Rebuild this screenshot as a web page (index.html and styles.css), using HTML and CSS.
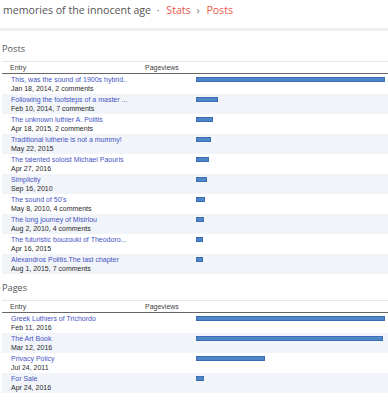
FILE: index.html
```
<!DOCTYPE html>
<html>
	<head>
		<meta charset="UTF-8">
		<title>Stats</title>
		<link rel="stylesheet" href="styles.css">
	</head>
	<body>
		<header class="topbar">
			<span class="blog">memories of the innocent age</span>
			<span class="dot">·</span>
			<a class="crumb">Stats</a>
			<span class="sep">›</span>
			<a class="crumb">Posts</a>
		</header>

		<section class="block">
			<h2>Posts</h2>
			<div class="stats">
				<div class="head">
					<span class="col-entry">Entry</span>
					<span class="col-views">Pageviews</span>
					<span></span>
				</div>
				<div class="row">
					<div class="entry"><a>This, was the sound of 1900s hybrid..</a><span>Jan 18, 2014, 2 comments</span></div>
					<div></div>
					<div class="bar-cell"><div class="bar" style="width:189px"></div></div>
				</div>
				<div class="row">
					<div class="entry"><a>Following the footsteps of a master ...</a><span>Feb 10, 2014, 7 comments</span></div>
					<div></div>
					<div class="bar-cell"><div class="bar" style="width:22px"></div></div>
				</div>
				<div class="row">
					<div class="entry"><a>The unknown luthier A. Politis</a><span>Apr 18, 2015, 2 comments</span></div>
					<div></div>
					<div class="bar-cell"><div class="bar" style="width:17px"></div></div>
				</div>
				<div class="row">
					<div class="entry"><a>Traditional lutherie is not a mummy!</a><span>May 22, 2015</span></div>
					<div></div>
					<div class="bar-cell"><div class="bar" style="width:15px"></div></div>
				</div>
				<div class="row">
					<div class="entry"><a>The talented soloist Michael Paouris</a><span>Apr 27, 2016</span></div>
					<div></div>
					<div class="bar-cell"><div class="bar" style="width:13px"></div></div>
				</div>
				<div class="row">
					<div class="entry"><a>Simplicity</a><span>Sep 16, 2010</span></div>
					<div></div>
					<div class="bar-cell"><div class="bar" style="width:11px"></div></div>
				</div>
				<div class="row">
					<div class="entry"><a>The sound of 50's</a><span>May 8, 2010, 4 comments</span></div>
					<div></div>
					<div class="bar-cell"><div class="bar" style="width:9px"></div></div>
				</div>
				<div class="row">
					<div class="entry"><a>The long journey of Misirlou</a><span>Aug 2, 2010, 4 comments</span></div>
					<div></div>
					<div class="bar-cell"><div class="bar" style="width:8px"></div></div>
				</div>
				<div class="row">
					<div class="entry"><a>The futuristic bouzouki of Theodoro...</a><span>Apr 16, 2015</span></div>
					<div></div>
					<div class="bar-cell"><div class="bar" style="width:7px"></div></div>
				</div>
				<div class="row">
					<div class="entry"><a>Alexandros Politis.The last chapter</a><span>Aug 1, 2015, 7 comments</span></div>
					<div></div>
					<div class="bar-cell"><div class="bar" style="width:7px"></div></div>
				</div>
			</div>
		</section>

		<section class="block">
			<h2>Pages</h2>
			<div class="stats">
				<div class="head">
					<span class="col-entry">Entry</span>
					<span class="col-views">Pageviews</span>
					<span></span>
				</div>
				<div class="row">
					<div class="entry"><a>Greek Luthiers of Trichordo</a><span>Feb 11, 2016</span></div>
					<div></div>
					<div class="bar-cell"><div class="bar" style="width:189px"></div></div>
				</div>
				<div class="row">
					<div class="entry"><a>The Art Book</a><span>Mar 12, 2016</span></div>
					<div></div>
					<div class="bar-cell"><div class="bar" style="width:187px"></div></div>
				</div>
				<div class="row">
					<div class="entry"><a>Privacy Policy</a><span>Jul 24, 2011</span></div>
					<div></div>
					<div class="bar-cell"><div class="bar" style="width:69px"></div></div>
				</div>
				<div class="row">
					<div class="entry"><a>For Sale</a><span>Apr 24, 2016</span></div>
					<div></div>
					<div class="bar-cell"><div class="bar" style="width:8px"></div></div>
				</div>
			</div>
		</section>
	</body>
</html>
```

FILE: styles.css
```
html,body{
	width: 100%;
	background: #fff;
}
*{
	margin: 0;
	padding: 0;
	box-sizing: border-box;
}
body{
	font-family: "Liberation Sans", Arial, sans-serif;
}

/*顶部标题*/
.topbar{
	height: 31px;
	padding: 2px 0 0 3px;
	border-bottom: 3px solid #efefef;
	font-family: "Open Sans", sans-serif;
	font-size: 10.6px;
	line-height: 16px;
	color: #555;
	white-space: nowrap;
}
.topbar .dot{
	margin: 0 4px 0 3px;
	color: #777;
}
.topbar .sep{
	margin: 0 4px 0 3px;
	color: #777;
}
.topbar .crumb{
	color: #e9564b;
}

.block{
	padding-left: 2px;
}
.block h2{
	margin: 12px 0 6px;
	font-family: "Open Sans", sans-serif;
	font-weight: normal;
	font-size: 9.2px;
	line-height: 12px;
	color: #555;
}
.block + .block h2{
	margin-top: 8px;
}

.stats .head,
.stats .row{
	display: grid;
	grid-template-columns: 143px 51px 1fr;
}
.stats .head{
	height: 13px;
	border-top: 1px solid #e8e8e8;
	border-bottom: 1px solid #666;
	font-size: 7px;
	line-height: 11px;
	color: #444;
}
.col-entry{
	padding-left: 8px;
}
.stats .row{
	height: 20px;
}
.stats .row:nth-child(odd){
	background: #f1f4f9;
}
.entry{
	padding: 2px 0 0 9px;
	display: flex;
	flex-direction: column;
	font-size: 7px;
	line-height: 8.5px;
	white-space: nowrap;
}
.entry a{
	color: #4653c4;
}
.entry span{
	color: #2a2a2a;
}
.bar-cell{
	padding-top: 3px;
}
.bar{
	height: 5px;
	background: #4f86c8;
	border: 1px solid #3b6cb5;
}
```
